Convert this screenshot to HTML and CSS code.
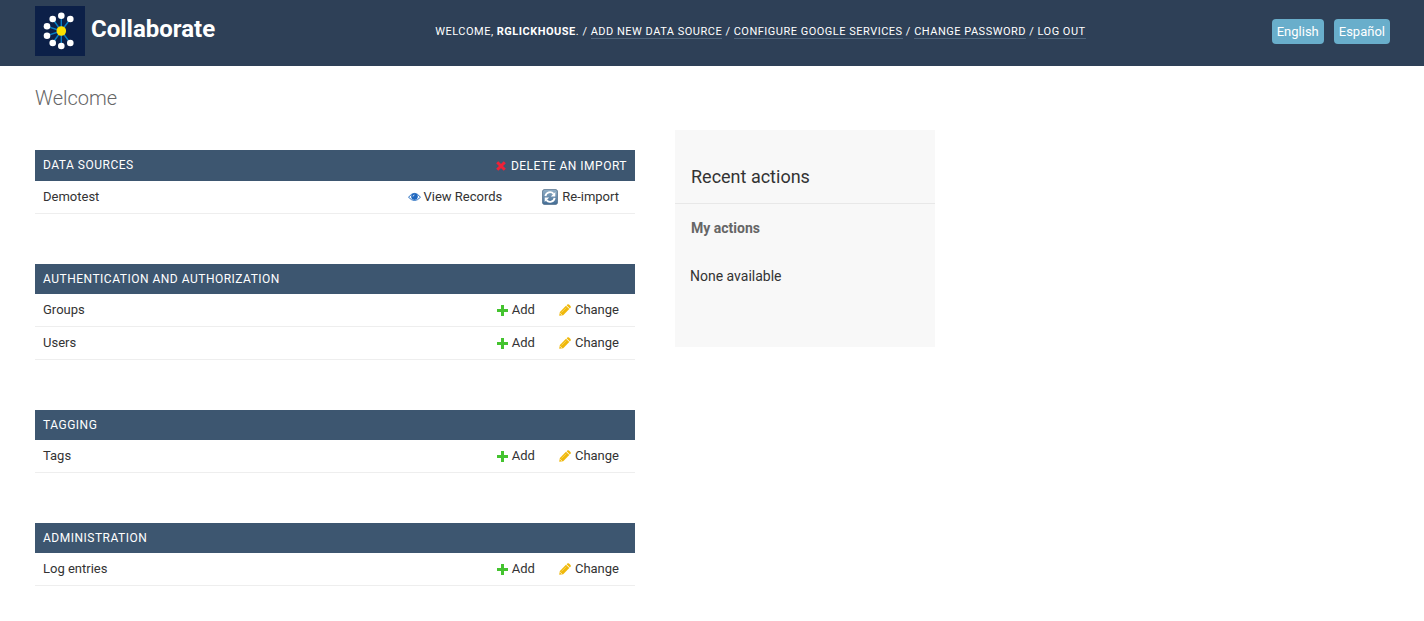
FILE: index.html
```html
<!DOCTYPE html>
<html lang="en">
<head>
<meta charset="utf-8">
<title>Collaborate</title>
<link rel="stylesheet" href="styles.css">
</head>
<body>
<svg class="sprite" aria-hidden="true">
  <symbol id="add" viewBox="0 0 11 11"><path d="M4 0h3v4h4v3H7v4H4V7H0V4h4z" fill="#44c32f"/></symbol>
  <symbol id="change" viewBox="0 0 12 12"><path d="M0.2 11.8L0.9 7.9 7 1.8l3.3 3.3L4.2 11.2z" fill="#efb80b"/><path d="M7.6 1.2l0.7-0.7q0.9-0.7 1.7 0.1l1.5 1.5q0.7 0.9 0 1.7l-0.7 0.7z" fill="#efb80b"/><path d="M2.4 8.5l4.8-4.8" stroke="#ffdf70" stroke-width="0.7"/><path d="M1.2 9.3l1.5 1.5" stroke="#fff" stroke-width="0.8"/></symbol>
</svg>
<header class="header">
  <a class="brand" href="#">
    <svg class="logo" viewBox="0 0 50 50" aria-hidden="true">
      <rect width="50" height="50" fill="#0c2048"/>
      <path d="M26.3 9.7V40M26.3 25L17.7 13M26.3 25l9-12M26.3 25L12 20.3M26.3 25L12 29.7M26.3 25l-8.6 12M26.3 25l9 12" stroke="#087fc5" stroke-width="1.4"/>
      <g fill="#fff"><circle cx="26.3" cy="9.7" r="3.3"/><circle cx="17.7" cy="13" r="3.3"/><circle cx="35.3" cy="13" r="3.3"/><circle cx="12" cy="20.3" r="3.3"/><circle cx="12" cy="29.7" r="3.3"/><circle cx="17.7" cy="37" r="3.3"/><circle cx="26.3" cy="40" r="3.3"/><circle cx="35.3" cy="37" r="3.3"/></g>
      <circle cx="26.3" cy="25" r="4.8" fill="#fbe000"/>
    </svg>
    <span>Collaborate</span>
  </a>
  <nav class="tools">Welcome, <strong>rglickhouse</strong>. / <a href="#">Add new data source</a> / <a href="#">Configure Google services</a> / <a href="#">Change password</a> / <a href="#">Log out</a></nav>
  <div class="languages">
    <button type="button">English</button>
    <button type="button">Español</button>
  </div>
</header>
<main class="content">
  <h1>Welcome</h1>
  <div class="columns">
    <div class="modules">
      <section class="module">
        <div class="caption tall"><h2>Data sources</h2><a href="#"><svg class="cross" viewBox="0 0 10 10" aria-hidden="true"><path d="M1.2 1.2l7.6 7.6M8.8 1.200l-7.600 7.600" stroke="#ee2137" stroke-width="3"/></svg>Delete an import</a></div>
        <table>
          <tr>
            <th scope="row"><a href="#">Demotest</a></th>
            <td><a class="view" href="#"><svg class="eye" viewBox="0 0 13 10" aria-hidden="true"><path d="M0.5 5.2Q6.5-2.4 12.5 5.2 6.5 11.8 0.5 5.2z" fill="#fff" stroke="#2b70c2" stroke-width="1"/><circle cx="6.5" cy="4.6" r="3.3" fill="#1f67bf"/><path d="M5 4.5q0-1.4 1.4-1.5" fill="none" stroke="#fff" stroke-width="0.8"/></svg>View Records</a></td>
            <td class="reimport"><a href="#"><svg class="refresh" viewBox="0 0 16 16" aria-hidden="true"><defs><linearGradient id="tile" x2="0" y2="1"><stop stop-color="#92b0c7"/><stop offset="1" stop-color="#416b94"/></linearGradient></defs><rect x="0.4" y="0.4" width="15.2" height="15.2" rx="2.5" fill="url(#tile)" stroke="#55718b" stroke-width="0.8"/><path d="M3.4 7.2A4.7 4.7 0 0 1 11.6 4.8M12.6 8.8A4.7 4.7 0 0 1 4.4 11.2" fill="none" stroke="#fff" stroke-width="1.9"/><path d="M13.3 3v4.5H8.8zM2.7 13V8.5h4.5z" fill="#fff"/></svg>Re-import</a></td>
          </tr>
        </table>
      </section>
      <section class="module">
        <div class="caption"><h2>Authentication and Authorization</h2></div>
        <table>
          <tr><th scope="row"><a href="#">Groups</a></th><td><a href="#"><svg class="add" aria-hidden="true"><use href="#add"/></svg>Add</a></td><td class="change"><a href="#"><svg class="pencil" aria-hidden="true"><use href="#change"/></svg>Change</a></td></tr>
          <tr><th scope="row"><a href="#">Users</a></th><td><a href="#"><svg class="add" aria-hidden="true"><use href="#add"/></svg>Add</a></td><td class="change"><a href="#"><svg class="pencil" aria-hidden="true"><use href="#change"/></svg>Change</a></td></tr>
        </table>
      </section>
      <section class="module">
        <div class="caption"><h2>Tagging</h2></div>
        <table>
          <tr><th scope="row"><a href="#">Tags</a></th><td><a href="#"><svg class="add" aria-hidden="true"><use href="#add"/></svg>Add</a></td><td class="change"><a href="#"><svg class="pencil" aria-hidden="true"><use href="#change"/></svg>Change</a></td></tr>
        </table>
      </section>
      <section class="module">
        <div class="caption"><h2>Administration</h2></div>
        <table>
          <tr><th scope="row"><a href="#">Log entries</a></th><td><a href="#"><svg class="add" aria-hidden="true"><use href="#add"/></svg>Add</a></td><td class="change"><a href="#"><svg class="pencil" aria-hidden="true"><use href="#change"/></svg>Change</a></td></tr>
        </table>
      </section>
    </div>
    <aside class="recent">
      <h2>Recent actions</h2>
      <h3>My actions</h3>
      <p>None available</p>
    </aside>
  </div>
</main>
</body>
</html>
```
FILE: styles.css
```css
* { box-sizing: border-box; }
body { margin: 0; background: #fff; color: #333; font: 13px/16px Roboto, "Liberation Sans", sans-serif; }
h1, h2, h3, p { margin: 0; }
a { color: inherit; text-decoration: none; }
svg { display: block; flex: none; }
.sprite { display: none; }

.header { display: flex; align-items: center; padding: 5px 34px 5px 35px; min-height: 66px; background: #2e4057; color: #fff; }
.brand { display: flex; align-items: center; gap: 6px; padding: 0 34px 4px 0; font-size: 24px; line-height: 32px; font-weight: 700; }
.brand span { padding-bottom: 4px; }
.logo { width: 50px; height: 50px; }
.tools { margin: 0 auto; padding-bottom: 2px; font-size: 11px; letter-spacing: 0.5px; text-transform: uppercase; }
.tools a { border-bottom: 1px solid #50657b; }
.languages { display: flex; gap: 10px; padding-bottom: 4px; }
.languages button { padding: 4px 5px; border: 0; border-radius: 4px; background: #69aecb; color: #fff; font: inherit; line-height: 17px; }

.content { padding: 20px 35px 34px; }
h1 { color: #666; font-size: 20px; line-height: 24px; font-weight: 300; }
.columns { display: grid; grid-template-columns: minmax(0, 600px) 260px; gap: 40px; align-items: start; margin-top: 20px; }
.modules { display: grid; gap: 50px; padding-top: 20px; }
.caption { display: flex; align-items: center; justify-content: space-between; padding: 7px 8px; background: #3d5670; color: #fff; font-size: 12px; letter-spacing: 0.5px; text-transform: uppercase; }
.caption.tall { align-items: flex-end; }
.caption.tall h2 { padding-bottom: 1px; }
.caption h2 { font-size: 12px; line-height: 16px; font-weight: 400; }
.caption a { display: flex; align-items: center; gap: 5px; }
.cross { width: 10px; height: 10px; }

table { width: 100%; border-collapse: separate; border-spacing: 0; }
th, td { padding: 8px; border-bottom: 1px solid #eee; text-align: left; font-weight: 400; vertical-align: top; }
th { width: 100%; }
td { padding-right: 16px; white-space: nowrap; }
td a { display: flex; align-items: center; gap: 4px; height: 16px; }
td .view { gap: 2px; }
.reimport { padding-left: 24px; }
.reimport .refresh { margin-top: -1px; }
.add { width: 11px; height: 11px; }
.pencil { width: 12px; height: 12px; }
.eye { width: 13px; height: 10px; }
.refresh { width: 16px; height: 16px; }

.recent { padding-bottom: 63px; background: #f8f8f8; }
.recent h2 { padding: 35px 16px 14px; border-bottom: 1px solid #e8e8e8; font-size: 18px; line-height: 24px; font-weight: 400; }
.recent h3 { padding: 16px 16px 0; color: #666; font-size: 14px; line-height: 16px; font-weight: 700; }
.recent p { padding: 32px 15px 0; font-size: 14px; }
```
